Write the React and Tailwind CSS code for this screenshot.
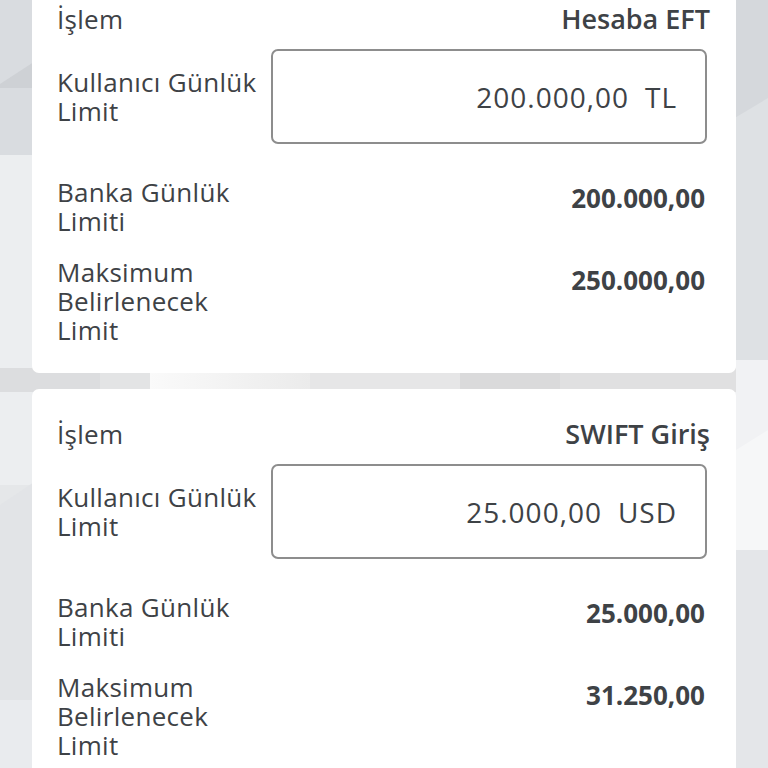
import React from "react";

const cards = [
  {
    type: "Hesaba EFT",
    amount: "200.000,00",
    currency: "TL",
    bank: "200.000,00",
    max: "250.000,00",
  },
  {
    type: "SWIFT Giriş",
    amount: "25.000,00",
    currency: "USD",
    bank: "25.000,00",
    max: "31.250,00",
  },
];

const Background = () => (
  <svg
    className="absolute inset-0 h-full w-full"
    viewBox="0 0 768 768"
    preserveAspectRatio="none"
  >
    <rect x="0" y="0" width="768" height="768" fill="#e5e7e9" />
    {/* left strip */}
    <rect x="0" y="0" width="40" height="155" fill="#d9dce0" />
    <polygon points="0,84 40,58 40,88 0,88" fill="#ced1d5" />
    <rect x="0" y="155" width="40" height="330" fill="#eceef0" />
    <polygon points="0,505 40,478 40,768 0,768" fill="#e2e4e7" />
    <rect x="0" y="700" width="40" height="68" fill="#e9ebee" />
    {/* right strip */}
    <rect x="728" y="0" width="40" height="120" fill="#d5d8dc" />
    <polygon points="728,122 768,98 768,360 728,360" fill="#dee1e4" />
    <rect x="728" y="360" width="40" height="190" fill="#f1f2f4" />
    <polygon points="728,455 768,430 768,550 728,550" fill="#f6f7f8" />
    <rect x="728" y="550" width="40" height="218" fill="#e4e6e9" />
    {/* gap band */}
    <rect x="0" y="368" width="100" height="24" fill="#dcdddf" />
    <rect x="100" y="368" width="50" height="24" fill="#e3e4e5" />
    <defs>
      <linearGradient id="g1" x1="0" x2="1" y1="0" y2="0">
        <stop offset="0" stopColor="#fafafa" />
        <stop offset="1" stopColor="#ebebeb" />
      </linearGradient>
    </defs>
    <rect x="150" y="368" width="160" height="24" fill="url(#g1)" />
    <rect x="310" y="368" width="150" height="24" fill="#e6e6e7" />
    <rect x="460" y="368" width="100" height="24" fill="#dadadb" />
    <rect x="560" y="368" width="176" height="24" fill="#e0e0e1" />
  </svg>
);

const LimitCard = ({ item }) => (
  <div className="bg-white rounded-[7px] pt-[30px] pb-[28px] pl-[25px] pr-[29px]">
    <div className="flex items-baseline justify-between leading-[29px]">
      <span className="text-[26px] tracking-[0.3px]">İşlem</span>
      <span className="text-[27px] font-semibold mr-[-3px]">{item.type}</span>
    </div>

    <div className="flex items-center mt-[15px]">
      <div className="w-[214px] shrink-0 text-[26px] leading-[29px] tracking-[0.3px]">
        Kullanıcı Günlük
        <br />
        Limit
      </div>
      <div className="flex-1 h-[95px] border-2 border-[#8d8d8d] rounded-[7px] flex items-center justify-end gap-4 pr-[28px] text-[28px] tracking-[1px]">
        <span>{item.amount}</span>
        <span>{item.currency}</span>
      </div>
    </div>

    <div className="flex justify-between mt-[34px]">
      <div className="text-[26px] leading-[29px] tracking-[0.3px]">
        Banka Günlük
        <br />
        Limiti
      </div>
      <div className="text-[26px] leading-[29px] font-bold mt-[6px] mr-[2px]">
        {item.bank}
      </div>
    </div>

    <div className="flex justify-between mt-[22px]">
      <div className="text-[26px] leading-[29px] tracking-[0.3px]">
        Maksimum
        <br />
        Belirlenecek
        <br />
        Limit
      </div>
      <div className="text-[26px] leading-[29px] font-bold mt-[8px] mr-[2px]">
        {item.max}
      </div>
    </div>
  </div>
);

export default function App() {
  return (
    <div
      className="relative min-h-screen h-[768px] overflow-hidden text-[#3e4246]"
      style={{ fontFamily: '"Open Sans", "Noto Sans", sans-serif' }}
    >
      <Background />
      <div className="relative flex flex-col gap-4 px-8 mt-[-26px]">
        {cards.map((item) => (
          <LimitCard key={item.type} item={item} />
        ))}
      </div>
    </div>
  );
}
